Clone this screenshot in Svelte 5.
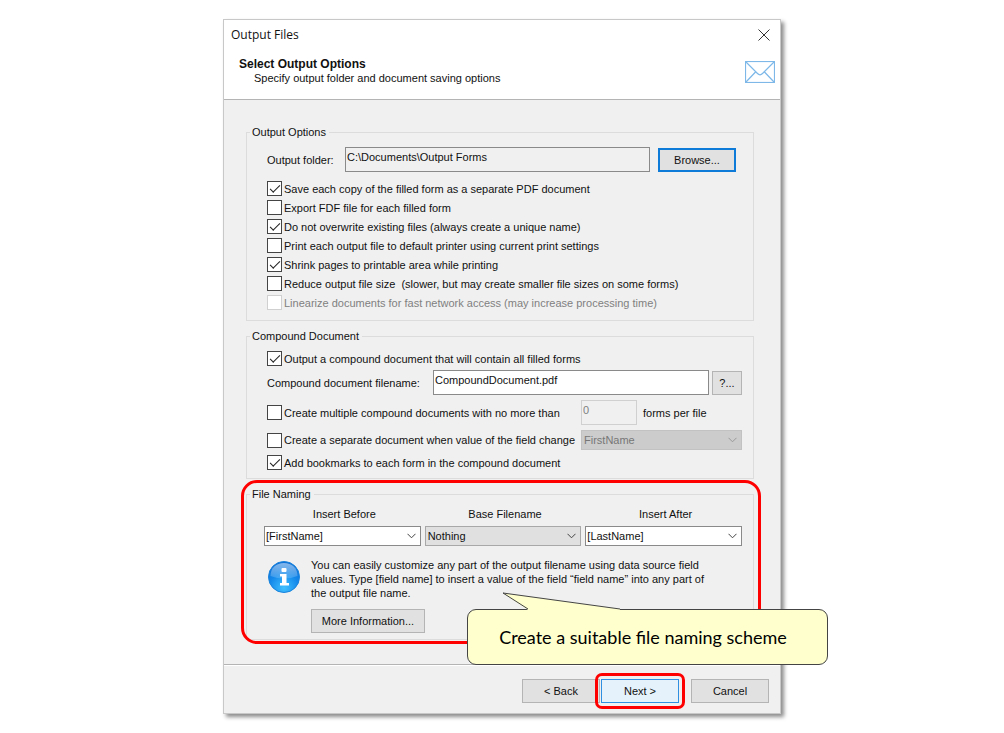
<script>
  let options = $state([
    { label: "Save each copy of the filled form as a separate PDF document", checked: true },
    { label: "Export FDF file for each filled form", checked: false },
    { label: "Do not overwrite existing files (always create a unique name)", checked: true },
    { label: "Print each output file to default printer using current print settings", checked: false },
    { label: "Shrink pages to printable area while printing", checked: true },
    { label: "Reduce output file size \u00a0(slower, but may create smaller file sizes on some forms)", checked: false },
    {
      label: "Linearize documents for fast network access (may increase processing time)",
      checked: false,
      disabled: true,
    },
  ]);

  const naming = [
    { id: "before", label: "Insert Before", value: "[FirstName]", editable: true },
    { id: "base", label: "Base Filename", value: "Nothing", editable: false },
    { id: "after", label: "Insert After", value: "[LastName]", editable: true },
  ];

  let compound = $state(true);
  let multiple = $state(false);
  let separate = $state(false);
  let bookmarks = $state(true);
</script>

{#snippet chevron()}
  <svg class="chevron" viewBox="0 0 9 6" aria-hidden="true">
    <path d="M0.5 0.8 4.5 4.8 8.5 0.8" fill="none" stroke="currentColor" />
  </svg>
{/snippet}

<main class="dialog">
  <header>
    <div class="titlebar">
      <span>Output Files</span>
      <button class="close" aria-label="Close">
        <svg viewBox="0 0 12 12" width="12" height="12">
          <path d="M0.5 0.5 11.5 11.5M11.5 0.5 0.5 11.5" stroke="#333" />
        </svg>
      </button>
    </div>
    <div class="heading">
      <div>
        <h1>Select Output Options</h1>
        <p>Specify output folder and document saving options</p>
      </div>
      <svg class="mail" viewBox="0 0 30 22" width="30" height="22" aria-hidden="true">
        <g fill="none" stroke="#7db8e8">
          <rect x="0.500" y="0.500" width="29" height="21" stroke-width="1.2" />
          <path d="M1 1 12.500 12.500Q15 15 17.500 12.500L29 1M1 21 10.500 11M29 21 19.500 11" stroke-width="1.2" />
        </g>
      </svg>
    </div>
  </header>

  <div class="body">
    <fieldset>
      <legend>Output Options</legend>
      <div class="field folder">
        <label for="folder">Output folder:</label>
        <input id="folder" class="text" type="text" readonly value="C:\Documents\Output Forms" />
        <button class="btn focused">Browse...</button>
      </div>
      <div class="options">
        {#each options as option}
          <label class="check" class:disabled={option.disabled}>
            <input type="checkbox" bind:checked={option.checked} disabled={option.disabled} />
            <span>{option.label}</span>
          </label>
        {/each}
      </div>
    </fieldset>

    <fieldset>
      <legend>Compound Document</legend>
      <label class="check">
        <input type="checkbox" bind:checked={compound} />
        <span>Output a compound document that will contain all filled forms</span>
      </label>
      <div class="field filename">
        <label for="filename">Compound document filename:</label>
        <input id="filename" class="text" type="text" value="CompoundDocument.pdf" />
        <button class="btn small">?...</button>
      </div>
      <div class="field split">
        <label class="check">
          <input type="checkbox" bind:checked={multiple} />
          <span>Create multiple compound documents with no more than</span>
        </label>
        <div class="count">
          <input id="count" class="text" type="text" value="0" disabled={!multiple} />
          <label for="count">forms per file</label>
        </div>
      </div>
      <div class="field split">
        <label class="check">
          <input type="checkbox" bind:checked={separate} />
          <span>Create a separate document when value of the field change</span>
        </label>
        <div class="combo">
          <select aria-label="Field" disabled={!separate}>
            <option>FirstName</option>
          </select>
          {@render chevron()}
        </div>
      </div>
      <label class="check">
        <input type="checkbox" bind:checked={bookmarks} />
        <span>Add bookmarks to each form in the compound document</span>
      </label>
    </fieldset>

    <fieldset class="naming">
      <legend>File Naming</legend>
      <div class="columns">
        {#each naming as part}
          <div class="column">
            <label for={part.id}>{part.label}</label>
            <div class="combo" class:editable={part.editable}>
              <select id={part.id}>
                <option>{part.value}</option>
              </select>
              {@render chevron()}
            </div>
          </div>
        {/each}
      </div>
      <div class="info">
        <svg viewBox="0 0 34 34" width="34" height="34" aria-hidden="true">
          <defs>
            <radialGradient id="ball" cx="0.5" cy="0.85" r="0.8">
              <stop offset="0" stop-color="#3fc0ff" />
              <stop offset="0.6" stop-color="#1488ea" />
              <stop offset="1" stop-color="#0b6fd6" />
            </radialGradient>
            <linearGradient id="gloss" x1="0" y1="0" x2="0" y2="1">
              <stop offset="0" stop-color="#fff" stop-opacity="0.5" />
              <stop offset="1" stop-color="#fff" stop-opacity="0.15" />
            </linearGradient>
          </defs>
          <circle cx="17" cy="17" r="15.5" fill="url(#ball)" stroke="#1b84dc" />
          <path d="M3.5 16C3.5 8 9 3 17 3s13.500 5 13.500 13Q17 21 3.500 16Z" fill="url(#gloss)" />
          <rect x="14.500" y="8" width="5" height="4" rx="1" fill="#fff" />
          <path d="M13 14h6.500v9H22v2.500h-9V23h2v-6.500h-2Z" fill="#fff" />
        </svg>
        <div>
          <p>
            You can easily customize any part of the output filename using data source field
            values. Type [field name] to insert a value of the field “field name” into any part of
            the output file name.
          </p>
          <button class="btn more">More Information...</button>
        </div>
      </div>

      <div class="marker"></div>
      <aside class="callout">
        <svg viewBox="0 0 120 18" width="120" height="18" aria-hidden="true">
          <path d="M26 18 1 1 118 17V18Z" fill="#feffcc" />
          <path d="M26 17 1 1 118 17" fill="none" stroke="#444" />
        </svg>
        Create a suitable file naming scheme
      </aside>
    </fieldset>
  </div>

  <footer>
    <button class="btn">&lt; Back</button>
    <div class="next">
      <button class="btn">Next &gt;</button>
    </div>
    <button class="btn cancel">Cancel</button>
  </footer>
</main>

<style>
  :global(body) {
    background: #fff;
  }

  * {
    box-sizing: border-box;
  }

  .dialog {
    max-width: 558px;
    margin: 19px auto;
    border: 1px solid #c8c8c8;
    background: #f0f0f0;
    box-shadow: 3px 3px 4px rgba(0, 0, 0, 0.45);
    color: #111;
    font: 11px/14px "Liberation Sans", Arial, sans-serif;
  }

  h1,
  p {
    margin: 0;
    font-size: 11px;
  }

  h1 {
    font-size: 12px;
  }

  header {
    background: #fff;
    border-bottom: 1px solid #b4b4b4;
    padding: 6px 5px 14px 7px;
  }

  .titlebar {
    display: flex;
    align-items: center;
    justify-content: space-between;
    height: 18px;
    font: 12px/18px "Open Sans", sans-serif;
  }

  .close {
    display: flex;
    padding: 0;
    margin-right: 5px;
    border: 0;
    background: none;
  }

  .heading {
    display: flex;
    justify-content: space-between;
    padding: 13px 0 0 8px;
  }

  .heading p {
    padding-left: 15px;
  }

  .mail {
    margin-top: 4px;
  }

  .body {
    display: flex;
    flex-direction: column;
    gap: 8px;
    padding: 25px 26px 24px 22px;
  }

  fieldset {
    min-width: 0;
    margin: 0;
    padding: 6px 11px 6px 17px;
    border: 1px solid #dcdcdc;
  }

  legend {
    margin-left: -14px;
    padding: 0 3px 0 2px;
  }

  .field {
    display: flex;
    align-items: center;
    padding: 2px 0 3px 3px;
  }

  .text {
    height: 25px;
    min-width: 0;
    padding: 0 1px 6px;
    border: 1px solid #8a8a8a;
    border-radius: 0;
    background: #fff;
    color: #111;
    font: inherit;
  }

  .text:read-only,
  .text:disabled {
    background: #f0f0f0;
  }

  .text:disabled {
    border-color: #d0d0d0;
    color: #808080;
  }

  .folder .text,
  .filename .text {
    flex: 1;
  }

  .folder {
    padding-right: 6px;
  }

  .folder label {
    width: 78px;
  }

  .folder .btn {
    margin-left: 8px;
  }

  .filename label {
    width: 166px;
  }

  .filename .btn {
    margin-left: 3px;
  }

  .options {
    padding: 4px 0 2px;
  }

  .check {
    display: flex;
    align-items: center;
    gap: 2px;
    height: 19px;
    padding-left: 3px;
    white-space: nowrap;
  }

  .check input {
    position: relative;
    flex: none;
    appearance: none;
    width: 15px;
    height: 15px;
    margin: 0;
    border: 1px solid #444;
    background: #fff;
  }

  .check input:checked::after {
    content: "";
    position: absolute;
    left: 2px;
    top: 3px;
    width: 9px;
    height: 4px;
    border: solid #222;
    border-width: 0 0 1px 1px;
    transform: rotate(-45deg);
  }

  .check input:disabled {
    border-color: #d0d0d0;
  }

  .disabled {
    color: #808080;
  }

  .split {
    display: grid;
    grid-template-columns: 309px 1fr;
    gap: 5px;
  }

  .split .check {
    padding-left: 0;
  }

  .count {
    display: flex;
    align-items: center;
    gap: 6px;
  }

  .count .text {
    width: 56px;
  }

  .combo {
    position: relative;
  }

  .combo select {
    display: block;
    appearance: none;
    width: 100%;
    height: 20px;
    padding: 0 18px 0 2px;
    border: 1px solid #a8a8a8;
    border-radius: 0;
    background: #e0e0e0;
    color: #111;
    font: inherit;
  }

  .combo.editable select {
    padding-left: 1px;
    border-color: #8a8a8a;
    background: #fff;
  }

  .combo select:disabled {
    border-color: #c2c2c2;
    background: #ccc;
    color: #777;
    opacity: 1;
  }

  .chevron {
    position: absolute;
    right: 5px;
    top: 7px;
    width: 9px;
    height: 6px;
    color: #444;
    pointer-events: none;
  }

  select:disabled + .chevron {
    color: #999;
  }

  .btn {
    flex: none;
    width: 78px;
    height: 24px;
    padding: 0;
    border: 1px solid #b4b4b4;
    background: #e1e1e1;
    color: #111;
    font: inherit;
  }

  .btn.focused {
    border: 2px solid #0f7bd9;
  }

  .btn.small {
    width: 30px;
  }

  .btn.more {
    width: 114px;
    margin-top: 9px;
  }

  .naming {
    position: relative;
  }

  .columns {
    display: grid;
    grid-template-columns: repeat(3, 1fr);
    gap: 4px;
  }

  .column label {
    display: block;
    margin-bottom: 5px;
    padding-left: 4px;
    text-align: center;
  }

  .info {
    display: flex;
    gap: 10px;
    padding: 12px 0 0 3px;
  }

  .info p {
    max-width: 404px;
  }

  .info svg {
    flex: none;
    margin-top: 2px;
  }

  .marker {
    position: absolute;
    inset: -21px -8px -5px -6px;
    border: 3px solid #f00;
    border-radius: 16px;
    pointer-events: none;
  }

  .callout {
    position: absolute;
    left: 220px;
    bottom: -26px;
    width: 361px;
    height: 56px;
    border: 1px solid #444;
    border-radius: 9px;
    background: #feffcc;
    color: #000;
    font: 18px/54px Lato, sans-serif;
    text-align: center;
    padding-right: 9px;
  }

  .callout svg {
    position: absolute;
    left: 34px;
    top: -18px;
  }

  footer {
    display: flex;
    justify-content: flex-end;
    padding: 14px 11px 10px;
    border-top: 1px solid #b4b4b4;
    box-shadow: inset 0 1px #fff;
  }

  .next {
    position: relative;
    margin-left: 1px;
  }

  .next::after {
    content: "";
    position: absolute;
    inset: -6px;
    border: 3px solid #f00;
    border-radius: 7px;
    pointer-events: none;
  }

  .next .btn {
    display: block;
    border-color: #2f8fe0;
    background: #e5f1fb;
  }

  .cancel {
    margin-left: 12px;
  }
</style>
